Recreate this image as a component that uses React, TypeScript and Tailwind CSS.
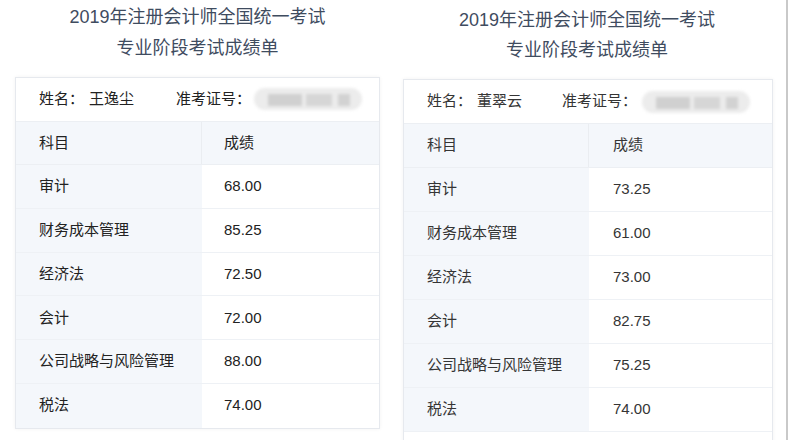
const font = { fontFamily: '"Liberation Sans", "Noto Sans CJK SC", sans-serif' };

interface Score {
  subject: string;
  score: string;
}

interface ReportProps {
  name: string;
  scores: Score[];
  rowH: string;
  titleClass: string;
  cardClass: string;
  textClass: string;
  nameW: string;
  idW: string;
  scorePad: string;
  divider: string;
  more?: boolean;
}

const left: Score[] = [
  { subject: '审计', score: '68.00' },
  { subject: '财务成本管理', score: '85.25' },
  { subject: '经济法', score: '72.50' },
  { subject: '会计', score: '72.00' },
  { subject: '公司战略与风险管理', score: '88.00' },
  { subject: '税法', score: '74.00' },
];

const right: Score[] = [
  { subject: '审计', score: '73.25' },
  { subject: '财务成本管理', score: '61.00' },
  { subject: '经济法', score: '73.00' },
  { subject: '会计', score: '82.75' },
  { subject: '公司战略与风险管理', score: '75.25' },
  { subject: '税法', score: '74.00' },
];

// blurred-out ticket number
function Blurred() {
  return (
    <div className="relative h-[22px] w-[108px] rounded-full bg-[#ececec] blur-[1.5px]">
      <div className="absolute left-[14px] top-[6px] h-[12px] w-[34px] bg-[#d0d0d0]" />
      <div className="absolute left-[52px] top-[6px] h-[12px] w-[26px] bg-[#d6d6d6]" />
      <div className="absolute left-[84px] top-[6px] h-[12px] w-[12px] bg-[#d2d2d2]" />
    </div>
  );
}

function Report({ name, scores, rowH, titleClass, cardClass, textClass, nameW, idW, scorePad, divider, more }: ReportProps) {
  return (
    <div>
      <div className={`text-center text-[18px] text-[#3f4c5f] ${titleClass}`}>
        <p>2019年注册会计师全国统一考试</p>
        <p>专业阶段考试成绩单</p>
      </div>

      <div className={`border border-[#e6e9ee] bg-white shadow-[0_0_4px_rgba(0,0,0,0.05)] text-[15px] ${textClass} ${cardClass}`}>
        <div className={`flex items-center border-b border-[#eceff3] pl-[23px] ${rowH}`}>
          <span className="w-[50px]">姓名：</span>
          <span className={nameW}>{name}</span>
          <span className={idW}>准考证号：</span>
          <Blurred />
        </div>

        <div className={`flex border-b border-[#eceff3] bg-[#f4f7fb] ${rowH}`}>
          <div className={`flex items-center border-r border-[#eaedf1] pl-[23px] ${divider}`}>科目</div>
          <div className={`flex flex-1 items-center ${scorePad}`}>成绩</div>
        </div>

        {scores.map((s, i) => (
          <div key={i} className={`flex ${i < scores.length - 1 || more ? 'border-b border-[#eef1f5]' : ''} ${rowH}`}>
            <div className={`flex items-center bg-[#f4f7fb] pl-[23px] ${divider}`}>{s.subject}</div>
            <div className={`flex flex-1 items-center bg-white ${scorePad}`}>{s.score}</div>
          </div>
        ))}

        {/* card runs on below the cut */}
        {more && <div className={rowH} />}
      </div>
    </div>
  );
}

export default function App() {
  return (
    <div className="flex h-[440px] w-[789px] overflow-hidden bg-white" style={font}>
      <div className="w-[395px] shrink-0">
        <Report
          name="王逸尘"
          scores={left}
          rowH="h-[43.7px]"
          titleClass="pt-[2px] leading-[31px]"
          cardClass="mx-[15px] mt-[13px]"
          textClass="text-[#222222]"
          nameW="w-[87px]"
          idW="w-[78px]"
          scorePad="pl-[22px]"
          divider="w-[186px]"
        />
      </div>

      <div className="flex flex-1">
        <div className="w-[384px]">
          <Report
            name="董翠云"
            scores={right}
            rowH="h-[44px]"
            titleClass="pt-[5px] leading-[30px]"
            cardClass="ml-[8px] mr-[6px] mt-[14px]"
            textClass="text-[#353535]"
            nameW="w-[85px]"
            idW="w-[80px]"
            scorePad="pl-[24px]"
            divider="w-[185px]"
            more
          />
        </div>
        <div className="ml-[7px] h-full w-[2px] bg-[#c9c9c9]" />
      </div>
    </div>
  );
}
